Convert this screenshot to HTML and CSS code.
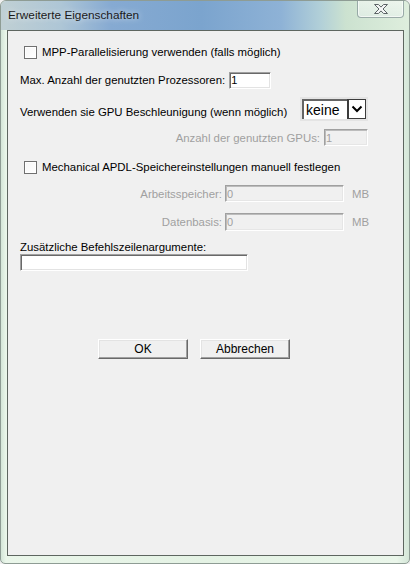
FILE: index.html
```html
<!DOCTYPE html>
<html lang="de">
<head>
    <meta charset="UTF-8">
    <title>Erweiterte Eigenschaften</title>
    <link rel="stylesheet" href="styles.css">
</head>
<body>
    <div class="window">
        <div class="titlebar">
            <span class="title">Erweiterte Eigenschaften</span>
            <div class="close-btn">
                <svg width="18" height="12" viewBox="0 0 18 12">
                    <path d="M2.5 1.5h4l2.5 2.6 2.5-2.6h4l-4.5 4.5 4.5 4.5h-4l-2.5-2.6-2.5 2.6h-4l4.5-4.5z" fill="#f4f6f6" stroke="#5c6466" stroke-width="1" stroke-linejoin="round"/>
                </svg>
            </div>
        </div>

        <div class="client">
            <!-- MPP -->
            <label class="row check-row r1">
                <span class="checkbox"></span>
                MPP-Parallelisierung verwenden (falls möglich)
            </label>
            <div class="row r2">
                <span class="label">Max. Anzahl der genutzten Prozessoren:</span>
                <input type="text" class="field small" value="1">
            </div>

            <!-- GPU -->
            <div class="row r3">
                <span class="label gpu-label">Verwenden sie GPU Beschleunigung (wenn möglich)</span>
                <div class="select">
                    <span class="select-value">keine</span>
                    <span class="select-arrow">
                        <svg width="12" height="8" viewBox="0 0 12 8">
                            <path d="M1.5 1.5l4.5 4.5 4.5-4.5" fill="none" stroke="#000" stroke-width="2"/>
                        </svg>
                    </span>
                </div>
            </div>
            <div class="row r4 right">
                <span class="label off">Anzahl der genutzten GPUs:</span>
                <input type="text" class="field disabled gpus" value="1" disabled>
            </div>

            <!-- Speicher -->
            <label class="row check-row r5">
                <span class="checkbox"></span>
                Mechanical APDL-Speichereinstellungen manuell festlegen
            </label>
            <div class="row r6">
                <span class="label off mem-label">Arbeitsspeicher:</span>
                <input type="text" class="field disabled mem" value="0" disabled>
                <span class="unit">MB</span>
            </div>
            <div class="row r7">
                <span class="label off mem-label">Datenbasis:</span>
                <input type="text" class="field disabled mem" value="0" disabled>
                <span class="unit">MB</span>
            </div>

            <div class="args-label">Zusätzliche Befehlszeilenargumente:</div>
            <input type="text" class="field args">

            <div class="buttons">
                <button class="btn">OK</button>
                <button class="btn">Abbrechen</button>
            </div>
        </div>
    </div>
</body>
</html>
```

FILE: styles.css
```css
body {
    margin: 0;
    padding: 0;
    background: #f0f0f0;
    font-family: "Liberation Sans", Arial, sans-serif;
    font-size: 11.4px;
    color: #000;
}

/* Aero style frame */
.window {
    width: 410px;
    height: 564px;
    box-sizing: border-box;
    display: flex;
    flex-direction: column;
    border: 1px solid #8e9c94;
    border-radius: 6px 6px 5px 5px;
    background: linear-gradient(to right, #d4e6d8 0px, #eaf6ea 5px, #e4f2e4 50%, #eaf6ea 97%, #d4e6d8 100%);
    overflow: hidden;
}

.titlebar {
    height: 29px;
    display: flex;
    align-items: flex-start;
    justify-content: space-between;
    background: linear-gradient(to right, #c0d0d4 0px, #aec6d6 60px, #86aad2 110px, #7ba4ce 200px, #8eb2d6 280px, #b2d0d8 320px, #cce2d0 345px, #deeedd 100%);
}

.title {
    margin: 7px 0 0 7px;
    font-size: 11.8px;
    color: #1a1a1a;
    text-shadow: 0 0 6px rgba(255, 255, 255, 0.8);
}

.close-btn {
    width: 45px;
    height: 17px;
    margin: -1px 5px 0 0;
    display: flex;
    align-items: center;
    justify-content: center;
    border: 1px solid rgba(120, 140, 140, 0.7);
    border-top: none;
    border-radius: 0 0 4px 4px;
    background: linear-gradient(to bottom, rgba(255, 255, 255, 0.5), rgba(230, 240, 236, 0.6));
    box-shadow: inset 0 0 0 1px rgba(255, 255, 255, 0.6);
}

.client {
    flex: 1;
    margin: 0 5px 7px 6px;
    border: 1px solid #5e6660;
    background: #f0f0f0;
    display: flex;
    flex-direction: column;
}

.row {
    display: flex;
    align-items: center;
}

.check-row {
    padding-left: 16px;
    height: 16px;
}

.checkbox {
    width: 11px;
    height: 11px;
    margin-right: 5px;
    border: 1px solid #707070;
    background: linear-gradient(to bottom right, #f6f6f6, #ffffff);
    box-shadow: inset 0 0 0 1px #ffffff;
}

.label {
    padding-left: 12px;
    white-space: nowrap;
}

.off {
    color: #a0a0a0;
}

.r1 { margin-top: 13px; }
.r2 { margin-top: 11px; height: 18px; }
.r3 { margin-top: 8px; height: 24px; }
.r4 { margin-top: 8px; height: 17px; }
.r5 { margin-top: 14px; height: 14px; }
.r6 { margin-top: 11px; height: 17px; }
.r7 { margin-top: 11px; height: 18px; }

.right {
    justify-content: flex-end;
    padding-right: 35px;
}

/* sunken text boxes */
.field {
    box-sizing: border-box;
    height: 17px;
    margin: 0;
    padding: 0 0 0 1px;
    font-family: "Liberation Sans", Arial, sans-serif;
    font-size: 11px;
    color: #000;
    background: #fff;
    border: 1px solid;
    border-color: #a0a0a0 #ffffff #ffffff #a0a0a0;
    box-shadow: inset 1px 1px 0 #696969, inset -1px -1px 0 #e3e3e3;
    outline: none;
}

.field.small {
    width: 42px;
    margin-left: 4px;
}

.field.disabled {
    background: #f0f0f0;
    color: #a0a0a0;
    box-shadow: inset 1px 1px 0 #bcbcbc, inset -1px -1px 0 #e6e6e6;
}

.field.gpus {
    width: 44px;
    margin-left: 4px;
}

.mem-label {
    width: 202px;
    text-align: right;
}

.field.mem {
    width: 119px;
    margin-left: 3px;
    height: 100%;
}

.unit {
    margin-left: 8px;
    color: #a0a0a0;
}

.gpu-label {
    width: 280px;
    padding-top: 6px;
}

.select {
    box-sizing: border-box;
    width: 68px;
    height: 24px;
    display: flex;
    padding: 2px;
    background: #e4e4e4;
}

.select-value {
    flex: 1;
    padding: 1px 0 0 2px;
    font-size: 14px;
    background: #fff;
    border-top: 2px solid #646464;
    border-left: 2px solid #646464;
}

.select-arrow {
    width: 16px;
    display: flex;
    align-items: center;
    justify-content: center;
    background: #fff;
    border: 1px solid #3c3c3c;
    border-left-width: 2px;
}

.args-label {
    margin-top: 10px;
    padding-left: 12px;
    height: 13px;
    line-height: 13px;
}

.field.args {
    width: 228px;
    margin-left: 12px;
    margin-top: 0;
}

.buttons {
    margin-top: 68px;
    padding-left: 90px;
    display: flex;
    gap: 12px;
}

.btn {
    width: 90px;
    height: 20px;
    padding: 0;
    font-family: "Liberation Sans", Arial, sans-serif;
    font-size: 12px;
    color: #000;
    background: #f0f0f0;
    border: 1px solid;
    border-color: #ffffff #696969 #696969 #ffffff;
    box-shadow: inset -1px -1px 0 #a0a0a0, inset 1px 1px 0 #e3e3e3;
}
```
